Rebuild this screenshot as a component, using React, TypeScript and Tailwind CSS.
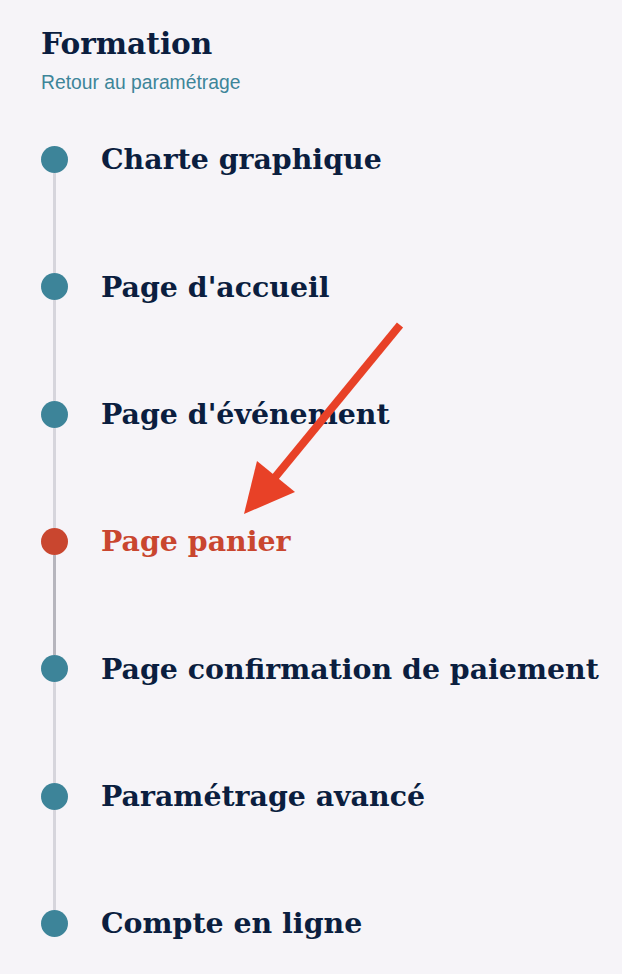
import React from 'react';

type Step = {
    label: string;
    active?: boolean;
};

const steps: Step[] = [
    { label: 'Charte graphique' },
    { label: "Page d'accueil" },
    { label: "Page d'événement" },
    { label: 'Page panier', active: true },
    { label: 'Page confirmation de paiement' },
    { label: 'Paramétrage avancé' },
    { label: 'Compte en ligne' },
];

const serif = { fontFamily: '"DejaVu Serif", serif' };

export default function App() {
    return (
        <div className="relative min-h-[974px] w-[622px] overflow-hidden bg-[#f6f4f8] pl-[41px] pt-[26px]">
            <h1 className="text-[29.6px] font-bold leading-[36px] text-[#0b1e3f]" style={serif}>
                Formation
            </h1>
            <a
                href="#"
                className="mt-[11px] block text-[19.3px] leading-[20px] text-[#3d8599]"
                style={{ fontFamily: '"Liberation Sans", Arial, sans-serif' }}
            >
                Retour au paramétrage
            </a>

            <div className="mt-[53px] flex flex-col">
                {steps.map((step, i) => (
                    <div key={step.label} className="flex flex-col">
                        <div className="flex h-[27px] items-center gap-[33px]">
                            <span
                                className={`h-[27px] w-[27px] shrink-0 rounded-full ${
                                    step.active ? 'bg-[#c9462f]' : 'bg-[#3d8499]'
                                }`}
                            />
                            <span
                                className={`whitespace-nowrap text-[28.4px] font-bold leading-none ${
                                    step.active ? 'text-[#c9462f]' : 'text-[#0b1e3f]'
                                }`}
                                style={serif}
                            >
                                {step.label}
                            </span>
                        </div>
                        {i < steps.length - 1 && (
                            <div
                                className={`ml-[12px] h-[100.33px] w-[3px] ${
                                    step.active ? 'bg-[#b6b5bd]' : 'bg-[#d6d5dc]'
                                }`}
                            />
                        )}
                    </div>
                ))}
            </div>

            {/* annotation arrow */}
            <svg className="pointer-events-none absolute left-0 top-0" width="622" height="974">
                <line x1="400" y1="325" x2="272" y2="481" stroke="#e84127" strokeWidth="8" />
                <polygon points="244,514 257,461 295,492" fill="#e84127" />
            </svg>
        </div>
    );
}
